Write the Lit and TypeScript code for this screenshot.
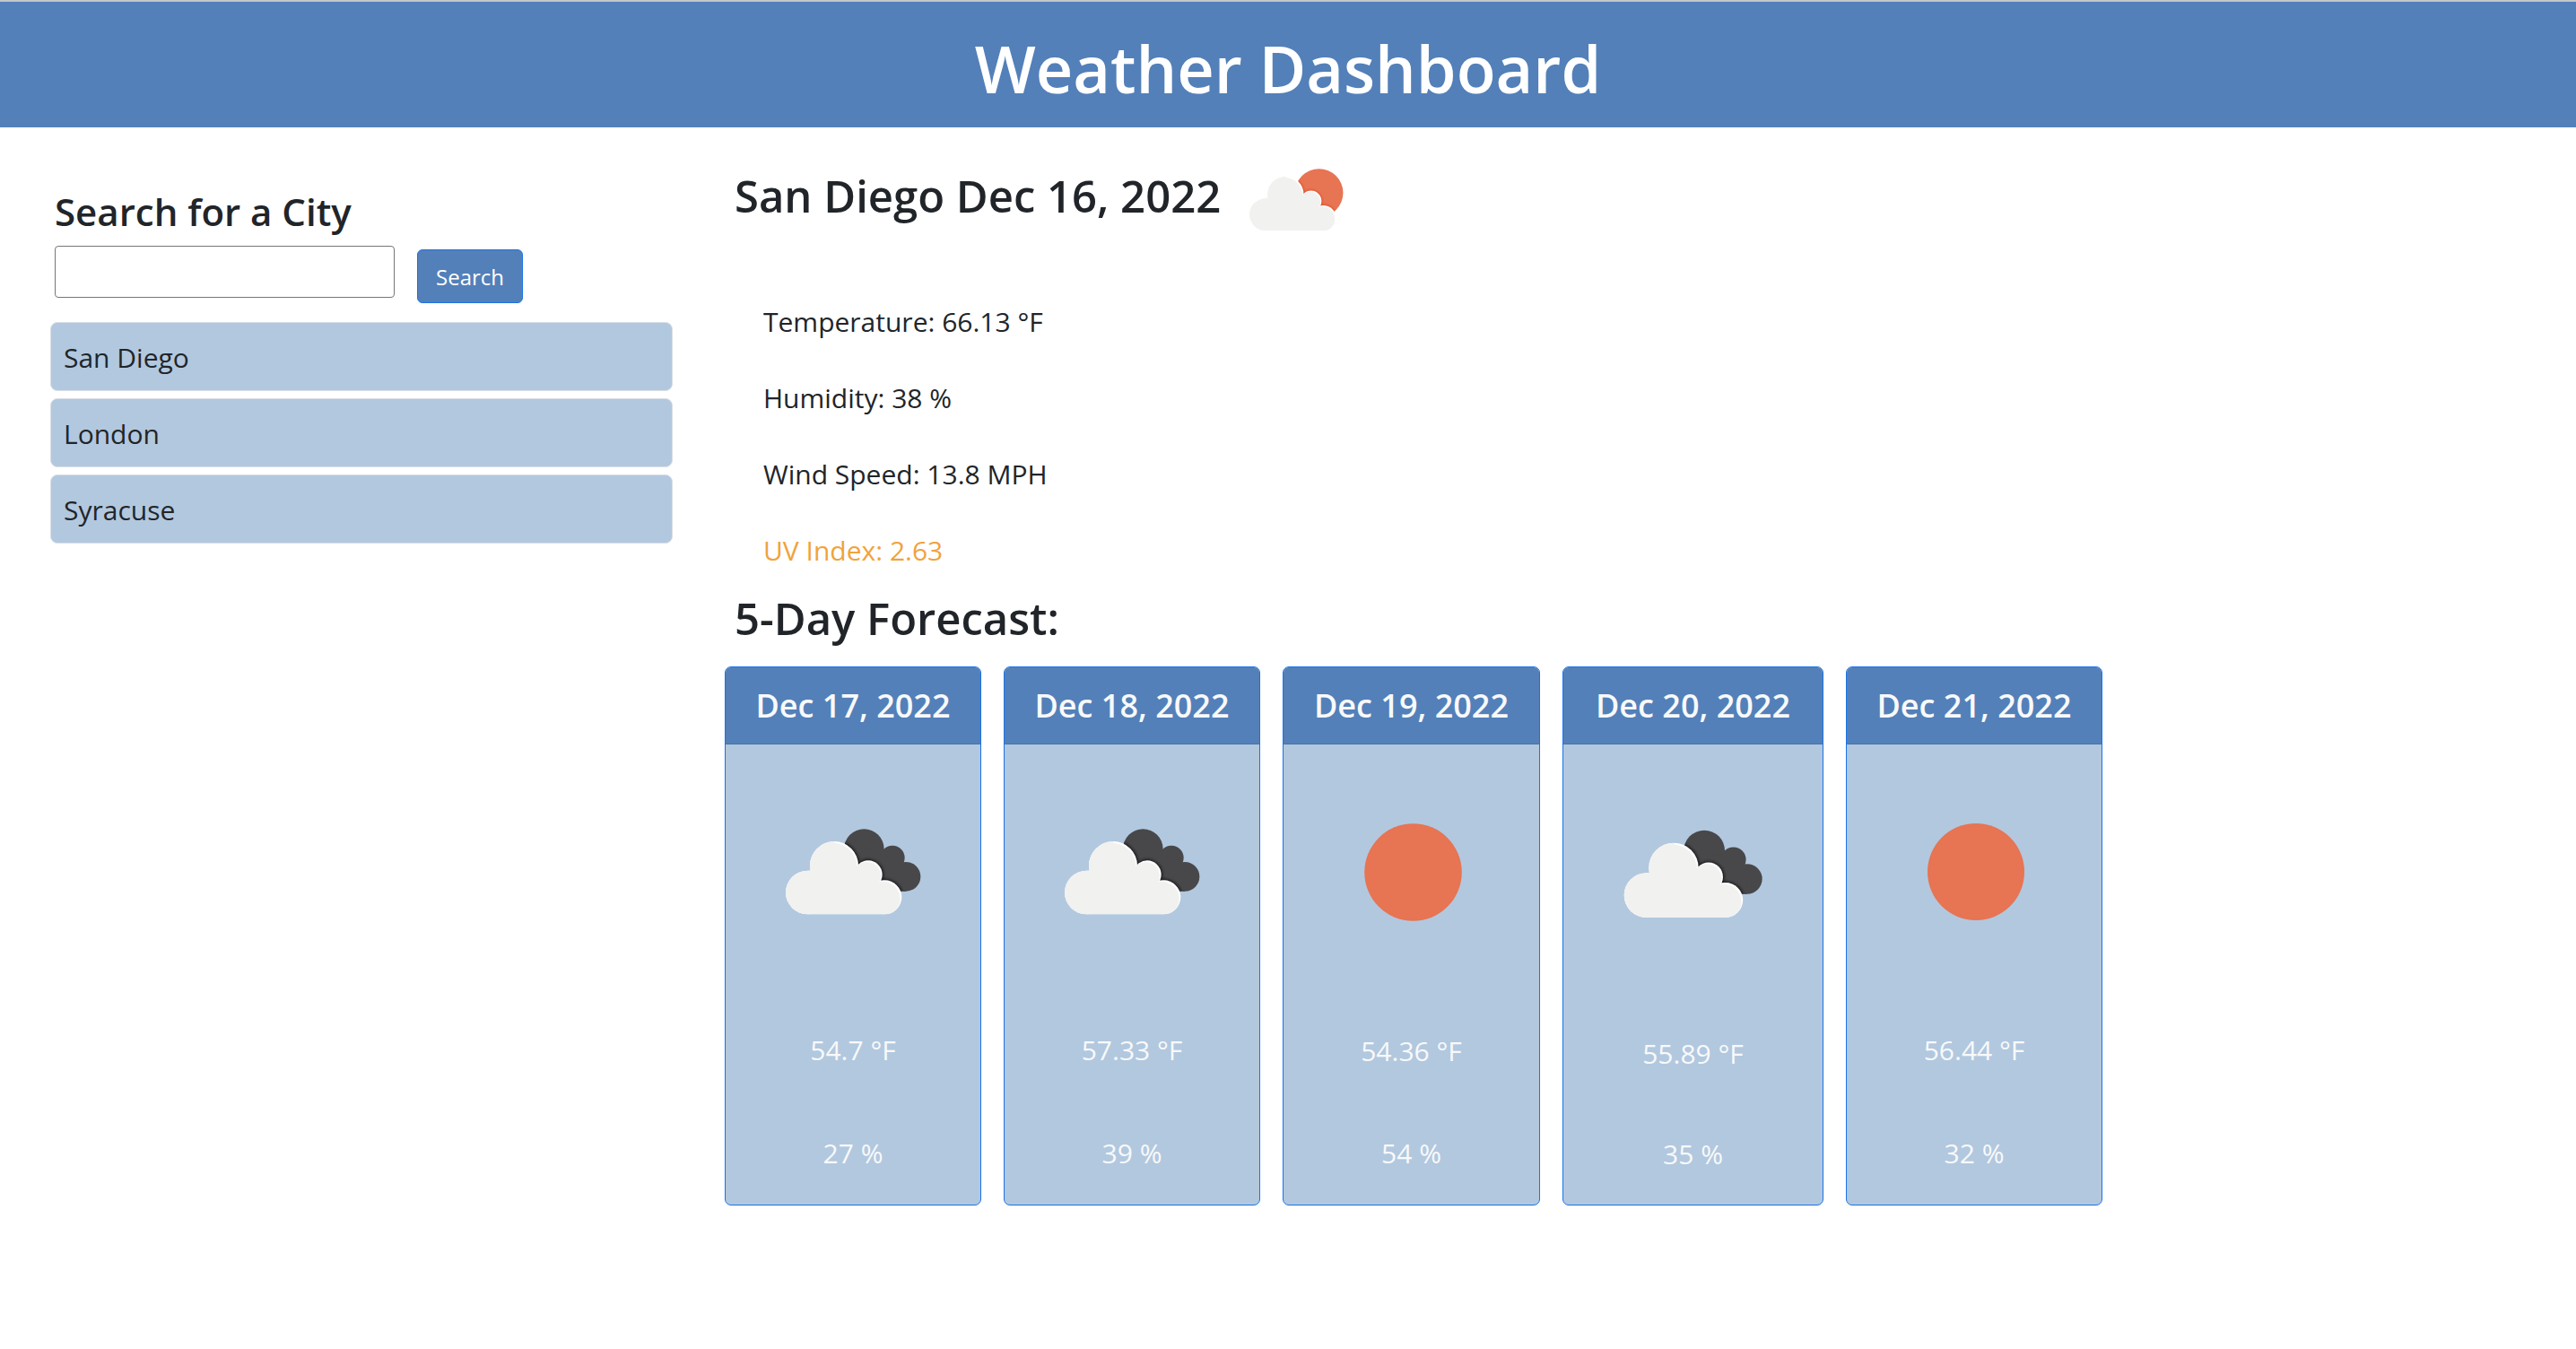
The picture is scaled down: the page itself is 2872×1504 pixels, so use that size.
import { LitElement, html, css, svg } from "lit";
import { customElement, property, state } from "lit/decorators.js";

type Sky = "sun" | "clouds" | "partly";

interface Day {
  date: string;
  sky: Sky;
  temp: string;
  humidity: string;
}

const cloudShape = svg`
  <circle cx="121" cy="288" r="73"></circle>
  <circle cx="210" cy="198" r="81"></circle>
  <circle cx="324" cy="228" r="47"></circle>
  <circle cx="379" cy="304" r="57"></circle>
  <path d="M121 215H210L324 228L379 304V361H121Z"></path>`;

const darkCloudShape = svg`
  <circle cx="310" cy="143" r="67"></circle>
  <circle cx="405" cy="172" r="41"></circle>
  <circle cx="450" cy="235" r="49"></circle>
  <path d="M310 143L405 172L450 235V284H330Z"></path>`;

@customElement("weather-icon")
export class WeatherIcon extends LitElement {
  @property() sky: Sky = "sun";

  static styles = css`
    :host {
      display: block;
    }
    .icon {
      display: block;
      width: 100%;
      aspect-ratio: 1;
    }
  `;

  private cloudOver(back: unknown, fill: string, shade: string) {
    return svg`
      <defs>
        <clipPath id="back">${back}</clipPath>
        <clipPath id="cloud">${cloudShape}</clipPath>
        <filter id="soft"><feGaussianBlur stdDeviation="4"></feGaussianBlur></filter>
        <filter id="edge"><feGaussianBlur stdDeviation="2"></feGaussianBlur></filter>
      </defs>
      <g fill=${fill}>${back}</g>
      <g clip-path="url(#back)">
        <g fill=${shade} stroke=${shade} stroke-width="8" filter="url(#soft)">${cloudShape}</g>
      </g>
      <g fill="#ffffff">${cloudShape}</g>
      <g clip-path="url(#cloud)">
        <g fill="#f1f1f0" transform="translate(-5 5)" filter="url(#edge)">${cloudShape}</g>
        <path fill="#f1f1f0" d="M48 288A73 73 0 0 1 121 215H129V198A81 81 0 0 1 210 117L260 215L370 290V361H121A73 73 0 0 1 48 288Z"></path>
      </g>`;
  }

  private art() {
    if (this.sky === "sun") {
      return svg`<circle cx="279" cy="219" r="162" fill="#e77452"></circle>`;
    }
    if (this.sky === "clouds") {
      return this.cloudOver(darkCloudShape, "#48484a", "#19191b");
    }
    return this.cloudOver(svg`<circle cx="360" cy="191" r="108"></circle>`, "#e77452", "#e0522f");
  }

  render() {
    return html`<svg class="icon" viewBox="-33 -87 612 612" aria-hidden="true">${this.art()}</svg>`;
  }
}

@customElement("forecast-card")
export class ForecastCard extends LitElement {
  @property({ attribute: false }) day!: Day;

  static styles = css`
    :host {
      display: flex;
    }
    .card {
      box-sizing: border-box;
      flex: 1;
      min-width: 0;
      display: flex;
      flex-direction: column;
      border: 1px solid #1a73e8;
      border-radius: 7px;
      overflow: hidden;
      background: #b2c8df;
      color: #f8f9fa;
      text-align: center;
    }
    .date {
      margin: 0;
      padding: 17px 0 16px;
      border-bottom: 1px solid #4a72a6;
      background: #5380b9;
      font-size: 36px;
      line-height: 52px;
      font-weight: 600;
      white-space: nowrap;
    }
    .picture {
      padding: 40px;
    }
    .value {
      flex: 1;
      min-height: 112px;
      margin: 0;
      display: flex;
      align-items: center;
      justify-content: center;
      font-size: 30px;
      line-height: 48px;
    }
  `;

  render() {
    return html`
      <article class="card">
        <h3 class="date">${this.day.date}</h3>
        <div class="picture"><weather-icon .sky=${this.day.sky}></weather-icon></div>
        <p class="value">${this.day.temp}</p>
        <p class="value">${this.day.humidity}</p>
      </article>
    `;
  }
}

@customElement("app-root")
export class AppRoot extends LitElement {
  @state() private cities = ["San Diego", "London", "Syracuse"];

  private days: Day[] = [
    { date: "Dec 17, 2022", sky: "clouds", temp: "54.7 °F", humidity: "27 %" },
    { date: "Dec 18, 2022", sky: "clouds", temp: "57.33 °F", humidity: "39 %" },
    { date: "Dec 19, 2022", sky: "sun", temp: "54.36 °F", humidity: "54 %" },
    { date: "Dec 20, 2022", sky: "clouds", temp: "55.89 °F", humidity: "35 %" },
    { date: "Dec 21, 2022", sky: "sun", temp: "56.44 °F", humidity: "32 %" },
  ];

  static styles = css`
    :host {
      display: block;
      min-height: 100vh;
      background: #ffffff;
      color: #212529;
      font-family: "Open Sans", "Noto Sans", sans-serif;
      font-size: 30px;
      line-height: 48px;
    }
    .banner {
      border-top: 2px solid #c4c6c9;
      padding: 28px 0 20px;
      background: #5380b9;
      color: #ffffff;
      text-align: center;
    }
    .banner-title {
      margin: 0;
      font-size: 72px;
      line-height: 92px;
      font-weight: 600;
    }
    .layout {
      display: grid;
      grid-template-columns: 694fr 1536fr 470fr;
      column-gap: 58px;
      padding: 4px 0 0 56px;
    }
    .search {
      padding: 62px 0 0 5px;
    }
    .search-title {
      display: block;
      font-size: 42px;
      line-height: 56px;
      font-weight: 600;
    }
    .search-row {
      display: flex;
      align-items: flex-start;
      gap: 25px;
      margin-top: 10px;
    }
    .city-input {
      box-sizing: border-box;
      width: 379px;
      height: 58px;
      padding: 2px 8px;
      border: 1px solid #767676;
      border-radius: 4px;
      background: #ffffff;
      color: inherit;
      font: inherit;
    }
    .search-button {
      box-sizing: border-box;
      height: 60px;
      margin-top: 4px;
      padding: 2px 20px 0;
      border: 1px solid #1a73e8;
      border-radius: 6px;
      background: #5380b9;
      color: #ffffff;
      font: inherit;
      font-size: 24px;
    }
    .cities {
      display: flex;
      flex-direction: column;
      gap: 8px;
      margin: 21px 0 0;
      padding: 0;
      list-style: none;
    }
    .city {
      box-sizing: border-box;
      height: 77px;
      padding: 15px 14px 12px;
      border: 1px solid #d9dee4;
      border-radius: 8px;
      background: #b2c8df;
    }
    .today {
      display: flex;
      align-items: center;
      gap: 12px;
      padding-left: 11px;
    }
    .section-title {
      margin: 0;
      font-size: 49px;
      line-height: 64px;
      font-weight: 600;
    }
    .today-icon {
      width: 152px;
    }
    .today .section-title {
      margin-bottom: 8px;
    }
    .readings {
      margin: 0;
      padding: 19px 0 0 43px;
      list-style: none;
    }
    .reading {
      padding: 18px 0 19px;
    }
    .uv {
      color: #f0a33c;
    }
    .forecast-title {
      padding-left: 11px;
    }
    .forecast {
      display: grid;
      grid-template-columns: 286fr 286fr 287fr 291fr 286fr;
      column-gap: 25px;
      margin-top: 22px;
    }
  `;

  render() {
    return html`
      <header class="banner"><h1 class="banner-title">Weather Dashboard</h1></header>
      <main class="layout">
        <aside>
          <form class="search" @submit=${(e: Event) => e.preventDefault()}>
            <label class="search-title" for="city">Search for a City</label>
            <div class="search-row">
              <input class="city-input" id="city" type="text" />
              <button class="search-button" type="submit">Search</button>
            </div>
          </form>
          <ul class="cities">
            ${this.cities.map((city) => html`<li class="city">${city}</li>`)}
          </ul>
        </aside>
        <section>
          <div class="today">
            <h2 class="section-title">San Diego Dec 16, 2022</h2>
            <weather-icon class="today-icon" sky="partly"></weather-icon>
          </div>
          <ul class="readings">
            <li class="reading">Temperature: 66.13 °F</li>
            <li class="reading">Humidity: 38 %</li>
            <li class="reading">Wind Speed: 13.8 MPH</li>
            <li class="reading uv">UV Index: 2.63</li>
          </ul>
          <h2 class="section-title forecast-title">5-Day Forecast:</h2>
          <div class="forecast">
            ${this.days.map((day) => html`<forecast-card .day=${day}></forecast-card>`)}
          </div>
        </section>
      </main>
    `;
  }
}
